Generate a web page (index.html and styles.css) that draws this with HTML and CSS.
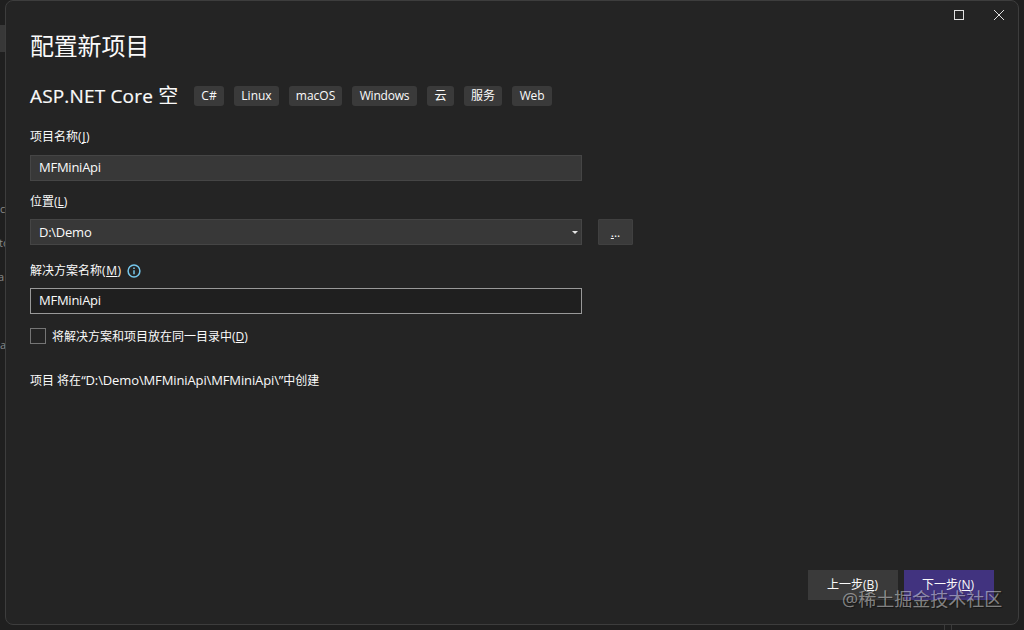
FILE: index.html
```html
<!DOCTYPE html>
<html lang="zh-CN">
<head>
  <meta charset="UTF-8">
  <meta name="viewport" content="width=device-width, initial-scale=1.0">
  <title>配置新项目</title>
  <link rel="stylesheet" href="styles.css">
</head>
<body>
  <!-- editor window behind the dialog -->
  <div class="editor">
    <div class="editor-tab"></div>
    <span class="code code-1">c</span>
    <span class="code code-2">to</span>
    <span class="code code-3">a</span>
    <span class="code code-4">a</span>
    <div class="splitter"></div>
  </div>

  <main class="dialog">
    <div class="window-buttons">
      <svg class="maximize" width="10" height="10" viewBox="0 0 10 10"><rect x="0.5" y="0.5" width="9" height="9"/></svg>
      <svg class="close" width="10" height="10" viewBox="0 0 10 10"><path d="M0 0L10 10M10 0L0 10"/></svg>
    </div>

    <h1>配置新项目</h1>

    <div class="template">
      <h2><span class="template-name">ASP.NET Core</span> 空</h2>
      <ul class="tags">
        <li class="tag-cs">C#</li>
        <li class="tag-linux">Linux</li>
        <li class="tag-mac">macOS</li>
        <li class="tag-win">Windows</li>
        <li class="tag-cloud">云</li>
        <li class="tag-service">服务</li>
        <li class="tag-web">Web</li>
      </ul>
    </div>

    <label class="label-name">项目名称<span class="key">(<u>J</u>)</span></label>
    <div class="field field-name">MFMiniApi</div>

    <label class="label-location">位置(<u>L</u>)</label>
    <div class="location">
      <div class="field field-location">D:\Demo
        <svg class="arrow" width="6" height="3" viewBox="0 0 6 3"><path d="M0 0H6L3 3Z"/></svg>
      </div>
      <button class="browse"><u>.</u>..</button>
    </div>

    <label class="label-solution">解决方案名称<span class="key">(<u>M</u>)</span>
      <svg class="info" width="14" height="14" viewBox="0 0 14 14"><circle cx="7" cy="7" r="5.9"/><path d="M7 6.2V10.3M7 3.6V5"/></svg>
    </label>
    <div class="field field-solution">MFMiniApi</div>

    <div class="check">
      <span class="box"></span>
      <span class="check-text">将解决方案和项目放在同一目录中(<u>D</u>)</span>
    </div>

    <p class="note">项目 将在<span class="path">“D:\Demo\MFMiniApi\MFMiniApi\”</span>中创建</p>

    <div class="actions">
      <button>上一步(<u>B</u>)</button>
      <button class="primary">下一步(<u>N</u>)</button>
    </div>
  </main>

  <div class="watermark">@稀土掘金技术社区</div>
</body>
</html>
```

FILE: styles.css
```css
* { box-sizing: border-box; margin: 0; padding: 0; }
body { position: relative; width: 1024px; height: 630px; overflow: hidden; background-color: #1f1f1f; color: #fafafa; font-family: "Open Sans", "Noto Sans CJK SC", sans-serif; font-size: 12px; }
u { text-decoration: underline; text-underline-offset: 1px; text-decoration-thickness: 1px; text-decoration-skip-ink: none; }

.editor-tab { position: absolute; left: 0; top: 25px; width: 6px; height: 27px; background-color: #383838; }
.code { position: absolute; left: 0; color: #8a8a8a; font-size: 11px; line-height: 14px; }
.code-1 { top: 202px; }
.code-2 { top: 236px; left: -1px; }
.code-3 { top: 270px; left: -2px; }
.code-4 { top: 338px; }
.splitter { position: absolute; left: 944px; top: 625px; width: 8px; height: 5px; border: 1px solid #3a3a3a; border-width: 0 1px; }

.dialog { position: absolute; left: 5px; top: 0; width: 1014px; height: 625px; padding: 29px 24px 24px; display: flex; flex-direction: column; background-color: #242424; border: 1px solid #3d3d3d; border-radius: 8px; }
.window-buttons { position: absolute; top: 9px; right: 14px; display: flex; gap: 30px; }
.window-buttons svg { fill: none; stroke: #e0e0e0; }

h1 { font-size: 24px; line-height: 31px; font-weight: 400; letter-spacing: -0.2px; }
.template { display: flex; align-items: center; height: 24px; margin-top: 23px; }
h2 { width: 164px; font-size: 20px; line-height: 24px; font-weight: 400; white-space: nowrap; }
.template-name { font-size: 19px; letter-spacing: 0.17px; -webkit-text-stroke: 0.2px #fafafa; }
.tags { display: flex; gap: 10px; list-style: none; }
.tags li { height: 20px; line-height: 20px; text-align: center; white-space: nowrap; background-color: #3a3a3a; border-radius: 3px; }
.tag-cs { width: 30px; }
.tag-linux { width: 45px; }
.tag-mac { width: 53px; }
.tags .tag-win { width: 65px; letter-spacing: -0.2px; }
.tag-cloud { width: 27px; }
.tag-service { width: 38px; }
.tags .tag-web { width: 40px; letter-spacing: -0.2px; }

label { display: flex; align-items: center; height: 18px; line-height: 18px; }
.label-name { margin-top: 20px; }
.label-location { margin-top: 12px; }
.label-solution { margin-top: 17px; }
.key { letter-spacing: 0.6px; }
.info { margin-left: 5px; fill: none; stroke: #75c7ec; stroke-width: 1.5; }

.field { display: flex; align-items: center; justify-content: space-between; width: 552px; height: 26px; padding: 0 3px 0 8px; font-size: 13px; letter-spacing: -0.25px; background-color: #383838; border: 1px solid #454545; }
.field-name { margin-top: 9px; padding-bottom: 2px; }
.field-solution { margin-top: 8px; padding-bottom: 2px; background-color: #1f1f1f; border-color: #999; }
.location { display: flex; gap: 16px; margin-top: 8px; }
.arrow { fill: #e6e6e6; }
button { color: #fafafa; font: inherit; background-color: #3a3a3a; border: none; }
.browse { width: 35px; height: 26px; border: 1px solid #404040; border-radius: 1px; }

.check { display: flex; align-items: center; gap: 6px; height: 16px; margin-top: 14px; }
.box { width: 16px; height: 16px; border: 1px solid #757575; }
.note { height: 18px; margin-top: 27px; line-height: 18px; }
.path { font-size: 13px; letter-spacing: -0.12px; }

.actions { display: flex; gap: 6px; justify-content: flex-end; margin-top: auto; }
.actions button { width: 90px; height: 30px; padding: 0 1px 2px 0; }
.actions .primary { padding-right: 2px; background-color: #41337f; }
.watermark { position: absolute; left: 842px; top: 587px; font-size: 18px; line-height: 24px; color: rgba(255, 255, 255, 0.45); text-shadow: 1px 1px 1px rgba(0, 0, 0, 0.4); white-space: nowrap; }
```
